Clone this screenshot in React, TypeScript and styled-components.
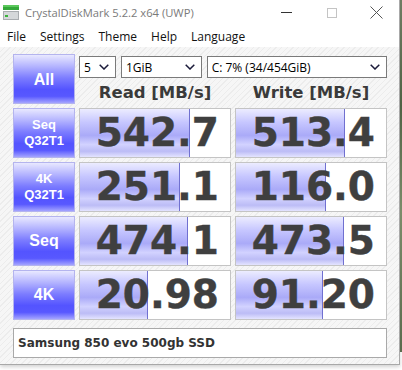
import { FC } from "react";
import styled, { createGlobalStyle } from "styled-components";

interface IResult {
  label: string[];
  read: number;
  write: number;
}

const results: IResult[] = [
  { label: ["Seq", "Q32T1"], read: 542.7, write: 513.4 },
  { label: ["4K", "Q32T1"], read: 251.1, write: 116.0 },
  { label: ["Seq"], read: 474.1, write: 473.5 },
  { label: ["4K"], read: 20.98, write: 91.2 },
];

// log scale meter, same feel as the original app
const meter = (v: number) => {
  const f = (Math.log10(v) + 0.95) / 5.04;
  return Math.max(0, Math.min(1, f)) * 150;
};

const fmt = (v: number) => (v >= 100 ? v.toFixed(1) : v.toFixed(2));

const Chevron: FC = () => (
  <svg width="10" height="6" viewBox="0 0 10 6">
    <path d="M0.7 0.7 L5 5 L9.3 0.7" fill="none" stroke="#1b1b3a" strokeWidth="1.5" />
  </svg>
);

const AppIcon: FC = () => (
  <svg width="16" height="16" viewBox="0 0 16 16">
    <rect x="0" y="0" width="16" height="5" fill="#35a83a" />
    <rect x="0" y="0" width="16" height="2" fill="#5cc85c" />
    <rect x="0" y="6" width="16" height="9" fill="#a9adb0" />
    <rect x="1" y="7" width="14" height="7" fill="#d5d8da" />
    <rect x="2" y="10" width="3" height="2" fill="#3bb33b" />
  </svg>
);

export default function App() {
  return (
    <>
      <GlobalStyle />
      <Screen>
        <Window>
          <TitleBar>
            <TitleIcon>
              <AppIcon />
            </TitleIcon>
            <TitleText>CrystalDiskMark 5.2.2 x64 (UWP)</TitleText>
            <CaptionButton>
              <svg width="11" height="2" viewBox="0 0 11 2">
                <rect x="0" y="0" width="11" height="1" fill="#333" />
              </svg>
            </CaptionButton>
            <CaptionButton>
              <svg width="10" height="10" viewBox="0 0 10 10">
                <rect x="0.5" y="0.5" width="9" height="9" fill="none" stroke="#c4c4c4" />
              </svg>
            </CaptionButton>
            <CaptionButton>
              <svg width="13" height="13" viewBox="0 0 13 13">
                <path d="M0.5 0.5 L12.5 12.5 M12.5 0.5 L0.5 12.5" stroke="#555" strokeWidth="1" />
              </svg>
            </CaptionButton>
          </TitleBar>
          <MenuBar>
            <MenuItem>File</MenuItem>
            <MenuItem>Settings</MenuItem>
            <MenuItem>Theme</MenuItem>
            <MenuItem>Help</MenuItem>
            <MenuItem>Language</MenuItem>
          </MenuBar>
          <Main>
            <Board>
              <AllButton>All</AllButton>
              <TopArea>
                <SelectRow>
                  <Select $width={37}>
                    <span>5</span>
                    <Chevron />
                  </Select>
                  <Select $width={81}>
                    <span>1GiB</span>
                    <Chevron />
                  </Select>
                  <Select $width={181}>
                    <span>C: 7% (34/454GiB)</span>
                    <Chevron />
                  </Select>
                </SelectRow>
                <HeaderRow>
                  <Header>Read [MB/s]</Header>
                  <Header>Write [MB/s]</Header>
                </HeaderRow>
              </TopArea>
              {results.map((r) => (
                <Row key={r.label.join("-")}>
                  <LabelButton $small={r.label.length > 1}>
                    {r.label.map((l) => (
                      <span key={l}>{l}</span>
                    ))}
                  </LabelButton>
                  <ValueCell>
                    <Fill style={{ width: meter(r.read) }} />
                    <Value>{fmt(r.read)}</Value>
                  </ValueCell>
                  <ValueCell>
                    <Fill style={{ width: meter(r.write) }} />
                    <Value>{fmt(r.write)}</Value>
                  </ValueCell>
                </Row>
              ))}
              <Comment>Samsung 850 evo 500gb SSD</Comment>
            </Board>
          </Main>
        </Window>
        <Desktop />
      </Screen>
    </>
  );
}

const GlobalStyle = createGlobalStyle`
  body {
    margin: 0;
    background: #ffffff;
    overflow: hidden;
  }
`;

const Screen = styled.div`
  display: flex;
  align-items: flex-start;
  width: 402px;
  height: 370px;
`;

const Window = styled.div`
  width: 399px;
  height: 364px;
  display: flex;
  flex-direction: column;
  background: #ffffff;
  border-right: 1px solid #a8a8a8;
  border-bottom: 1px solid #a8a8a8;
  box-shadow: 0 2px 4px rgba(0, 0, 0, 0.18);
  flex-shrink: 0;
`;

const Desktop = styled.div`
  flex: 1;
  height: 352px;
  background: linear-gradient(180deg, #6f7d63 0%, #4f6244 30%, #7b8c6a 60%, #5a6b4d 100%);
`;

const TitleBar = styled.div`
  height: 25px;
  display: flex;
  align-items: center;
  font-family: "Open Sans", "Noto Sans", sans-serif;
`;

const TitleIcon = styled.div`
  width: 16px;
  height: 16px;
  margin: 0 5px 0 3px;
  display: flex;
`;

const TitleText = styled.div`
  flex: 1;
  font-size: 11.2px;
  color: #7a7a7a;
  padding-left: 1px;
`;

const CaptionButton = styled.div`
  width: 45px;
  height: 25px;
  display: flex;
  align-items: center;
  justify-content: center;
`;

const MenuBar = styled.div`
  height: 22px;
  display: flex;
  align-items: center;
  gap: 14px;
  padding-left: 7px;
  font-family: "Open Sans", "Noto Sans", sans-serif;
  font-size: 12px;
  color: #111;
`;

const MenuItem = styled.span``;

const Main = styled.div`
  flex: 1;
  padding: 7px 0 0 13px;
  background-color: #f4f4f4;
  background-image: repeating-linear-gradient(
    135deg,
    #f6f6f6 0px,
    #f6f6f6 3px,
    #ececec 3px,
    #ececec 4px
  );
`;

const Board = styled.div`
  display: grid;
  grid-template-columns: 62px 152px 152px;
  column-gap: 4px;
  row-gap: 4px;
  width: 374px;
`;

const Row = styled.div`
  display: contents;
`;

const buttonFace = `
  border: 1px solid #b4b4ee;
  background: linear-gradient(
    180deg,
    #e8e8ff 0%,
    #b8b8ff 22%,
    #7c7cff 48%,
    #5454ff 72%,
    #5858ff 86%,
    #a4a4ff 100%
  );
  color: #ffffff;
  font-family: "Liberation Sans", Arial, sans-serif;
  font-weight: 700;
  box-sizing: border-box;
`;

const AllButton = styled.div`
  ${buttonFace}
  height: 50px;
  display: flex;
  align-items: center;
  justify-content: center;
  font-size: 16px;
  padding-top: 2px;
`;

const LabelButton = styled.div<{ $small: boolean }>`
  ${buttonFace}
  height: 50px;
  display: flex;
  flex-direction: column;
  align-items: center;
  justify-content: center;
  font-size: ${(p) => (p.$small ? "13px" : "16px")};
  line-height: ${(p) => (p.$small ? "16px" : "18px")};
`;

const TopArea = styled.div`
  grid-column: 2 / 4;
  display: flex;
  flex-direction: column;
  height: 50px;
`;

const SelectRow = styled.div`
  display: flex;
  gap: 5px;
  margin-top: 2px;
  height: 22px;
`;

const Select = styled.div<{ $width: number }>`
  width: ${(p) => p.$width}px;
  height: 22px;
  box-sizing: border-box;
  border: 1px solid #7a7a7a;
  background: #ffffff;
  display: flex;
  align-items: center;
  justify-content: space-between;
  padding: 0 6px 0 4px;
  font-family: "Open Sans", "Noto Sans", sans-serif;
  font-size: 12px;
  color: #000;
`;

const HeaderRow = styled.div`
  flex: 1;
  display: grid;
  grid-template-columns: 152px 152px;
  column-gap: 4px;
  align-items: center;
`;

const Header = styled.div`
  text-align: center;
  font-family: "DejaVu Sans", Verdana, sans-serif;
  font-weight: 700;
  font-size: 16.5px;
  color: #3a3a3a;
  padding-top: 3px;
`;

const ValueCell = styled.div`
  height: 50px;
  box-sizing: border-box;
  border: 1px solid #c4c4c4;
  background: #ffffff;
  display: grid;
  grid-template-areas: "stack";
  overflow: hidden;
`;

const Fill = styled.div`
  grid-area: stack;
  height: 100%;
  box-sizing: border-box;
  border-right: 1px solid #7070d0;
  background: linear-gradient(
    180deg,
    #ececff 0%,
    #c6c6ff 28%,
    #aaaaf8 55%,
    #d2d2ff 74%,
    #bcbcf6 88%,
    #e4e4ff 100%
  );
`;

const Value = styled.div`
  grid-area: stack;
  align-self: center;
  justify-self: end;
  padding-right: 11px;
  font-family: "DejaVu Sans", Verdana, sans-serif;
  font-weight: 700;
  font-size: 39px;
  line-height: 48px;
  color: #3f3f3f;
  -webkit-text-stroke: 0.4px #3f3f3f;
`;

const Comment = styled.div`
  grid-column: 1 / -1;
  margin-top: 4px;
  height: 30px;
  box-sizing: border-box;
  border: 1px solid #a9a9a9;
  background: #ffffff;
  display: flex;
  align-items: center;
  padding-left: 4px;
  font-family: "DejaVu Sans", Verdana, sans-serif;
  font-weight: 700;
  font-size: 12px;
  color: #333;
`;
